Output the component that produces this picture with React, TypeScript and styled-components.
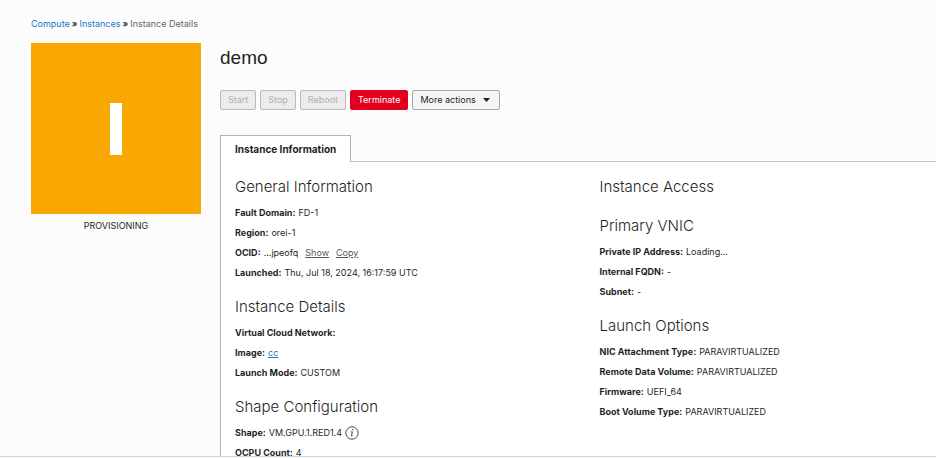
import React from "react";
import styled, { createGlobalStyle, css } from "styled-components";

const GlobalStyle = createGlobalStyle`
  * { box-sizing: border-box; }
  body {
    margin: 0;
    background: #fcfcfc;
    color: #1f1f1f;
    font-family: Inter, "Liberation Sans", Arial, sans-serif;
    font-size: 9px;
    line-height: 20px;
  }
`;

const Page = styled.div`
  display: flex;
  flex-direction: column;
  height: 100vh;
  overflow: hidden;
`;

const Main = styled.main`
  flex: 1;
  min-height: 0;
  overflow: hidden;
  padding: 14px 0 0 31px;
`;

const Footer = styled.footer`
  flex: none;
  height: 2px;
  border-top: 1px solid #cfd3d6;
  background: #fcfcfc;
`;

const Breadcrumbs = styled.nav`
  display: flex;
  gap: 2px;
  color: #666;
`;

const Crumb = styled.a`
  color: #1478cf;
  text-decoration: none;
`;

const Separator = styled.span`
  color: #1f1f1f;
  font-weight: 600;
`;

const Columns = styled.div`
  display: flex;
  gap: 19px;
  margin-top: 9px;
`;

const Status = styled.aside`
  flex: none;
  width: 170px;
  text-align: center;
`;

const StatusTile = styled.div`
  display: flex;
  align-items: center;
  justify-content: center;
  height: 171px;
  margin-bottom: 2px;
  background: #f8a800;
`;

const Details = styled.section`
  flex: 1;
  min-width: 0;
`;

const Title = styled.h1`
  margin: 2px 0 0;
  font-family: "Liberation Sans", Arial, sans-serif;
  font-size: 19px;
  line-height: 26px;
  font-weight: normal;
`;

const Actions = styled.div`
  display: flex;
  gap: 4px;
  margin: 19px 0 25px;
`;

const Button = styled.button<{ $variant?: "danger" | "menu" }>`
  display: flex;
  align-items: center;
  gap: 7px;
  height: 20px;
  padding: 0 7px;
  border: 1px solid #a6a6a6;
  border-radius: 2px;
  background: #f5f5f5;
  color: #1f1f1f;
  font: inherit;
  white-space: nowrap;

  &:disabled {
    border-color: #bababa;
    background: #ececec;
    color: #b0b0b0;
  }

  ${({ $variant }) =>
    $variant === "danger" &&
    css`
      border-color: #e2001f;
      background: #e2001f;
      color: #fff;
    `}

  ${({ $variant }) =>
    $variant === "menu" &&
    css`
      padding-right: 9px;
    `}
`;

const Tabs = styled.div`
  display: flex;
`;

const Tab = styled.button`
  height: 27px;
  padding: 0 14px;
  border: 1px solid #b3b3b3;
  border-bottom: 0;
  background: #fff;
  color: #1f1f1f;
  font: inherit;
  font-size: 10px;
  font-weight: 700;
`;

const TabFiller = styled.div`
  flex: 1;
  border-bottom: 1px solid #c4c4c4;
`;

const Panel = styled.div`
  display: grid;
  grid-template-columns: 13fr 12fr;
  padding: 15px 0 20px 14px;
  border-left: 1px solid #b3b3b3;
  background: #fff;
`;

const Group = styled.section`
  display: flex;
  flex-direction: column;
  margin-bottom: 14px;
`;

const GroupTitle = styled.h2`
  margin: 0 0 5px;
  font-size: 15px;
  font-weight: 300;
`;

const Fields = styled.dl`
  margin: 0;
  padding-top: 1px;
`;

const Field = styled.div`
  display: flex;
  align-items: center;
  gap: 3px;
`;

const Label = styled.dt`
  font-weight: 700;
`;

const Value = styled.dd`
  display: flex;
  align-items: center;
  gap: 3px;
  margin: 0;
`;

const ValueLink = styled.a`
  color: #1478cf;
`;

const TextButton = styled.button`
  margin-left: 4px;
  padding: 0;
  border: 0;
  background: none;
  color: #555;
  font: inherit;
  text-decoration: underline;
`;

type FieldData = { label: string; value?: React.ReactNode };

const InfoIcon = () => (
  <svg width="14" height="14" viewBox="0 0 14 14" fill="none" stroke="#333" aria-label="Shape information" role="img">
    <circle cx="7" cy="7" r="6.2" strokeWidth="0.9" />
    <path d="M5.9 5.9h1.5l-1 3.8c-.1.6.5.5 1.3-.2" strokeWidth="0.9" />
    <circle cx="7.8" cy="3.8" r="0.7" fill="#333" stroke="none" />
  </svg>
);

const InfoGroup = ({ title, fields = [] }: { title: string; fields?: FieldData[] }) => (
  <Group>
    <GroupTitle>{title}</GroupTitle>
    {fields.length > 0 && (
      <Fields>
        {fields.map(({ label, value }) => (
          <Field key={label}>
            <Label>{label}:</Label>
            <Value>{value}</Value>
          </Field>
        ))}
      </Fields>
    )}
  </Group>
);

export default function App() {
  return (
    <>
      <GlobalStyle />
      <Page>
        <Main>
          <Breadcrumbs aria-label="Breadcrumb">
            <Crumb href="#compute">Compute</Crumb>
            <Separator>»</Separator>
            <Crumb href="#instances">Instances</Crumb>
            <Separator>»</Separator>
            <span>Instance Details</span>
          </Breadcrumbs>
          <Columns>
            <Status>
              <StatusTile>
                <svg width="12" height="52" viewBox="0 0 12 52" aria-hidden="true">
                  <rect width="12" height="52" fill="#fff" />
                </svg>
              </StatusTile>
              PROVISIONING
            </Status>
            <Details>
              <Title>demo</Title>
              <Actions>
                <Button disabled>Start</Button>
                <Button disabled>Stop</Button>
                <Button disabled>Reboot</Button>
                <Button $variant="danger">Terminate</Button>
                <Button $variant="menu">
                  More actions
                  <svg width="7" height="4" viewBox="0 0 7 4" aria-hidden="true">
                    <path d="M0 0h7L3.5 4z" fill="#1f1f1f" />
                  </svg>
                </Button>
              </Actions>
              <Tabs role="tablist">
                <Tab role="tab" aria-selected="true">Instance Information</Tab>
                <TabFiller />
              </Tabs>
              <Panel role="tabpanel">
                <div>
                  <InfoGroup
                    title="General Information"
                    fields={[
                      { label: "Fault Domain", value: "FD-1" },
                      { label: "Region", value: "orei-1" },
                      {
                        label: "OCID",
                        value: (
                          <>
                            ...jpeofq
                            <TextButton>Show</TextButton>
                            <TextButton>Copy</TextButton>
                          </>
                        ),
                      },
                      { label: "Launched", value: "Thu, Jul 18, 2024, 16:17:59 UTC" },
                    ]}
                  />
                  <InfoGroup
                    title="Instance Details"
                    fields={[
                      { label: "Virtual Cloud Network" },
                      { label: "Image", value: <ValueLink href="#image">cc</ValueLink> },
                      { label: "Launch Mode", value: "CUSTOM" },
                    ]}
                  />
                  <InfoGroup
                    title="Shape Configuration"
                    fields={[
                      { label: "Shape", value: <>VM.GPU.1.RED1.4 <InfoIcon /></> },
                      { label: "OCPU Count", value: "4" },
                    ]}
                  />
                </div>
                <div>
                  <InfoGroup title="Instance Access" />
                  <InfoGroup
                    title="Primary VNIC"
                    fields={[
                      { label: "Private IP Address", value: "Loading..." },
                      { label: "Internal FQDN", value: "-" },
                      { label: "Subnet", value: "-" },
                    ]}
                  />
                  <InfoGroup
                    title="Launch Options"
                    fields={[
                      { label: "NIC Attachment Type", value: "PARAVIRTUALIZED" },
                      { label: "Remote Data Volume", value: "PARAVIRTUALIZED" },
                      { label: "Firmware", value: "UEFI_64" },
                      { label: "Boot Volume Type", value: "PARAVIRTUALIZED" },
                    ]}
                  />
                </div>
              </Panel>
            </Details>
          </Columns>
        </Main>
        <Footer />
      </Page>
    </>
  );
}
